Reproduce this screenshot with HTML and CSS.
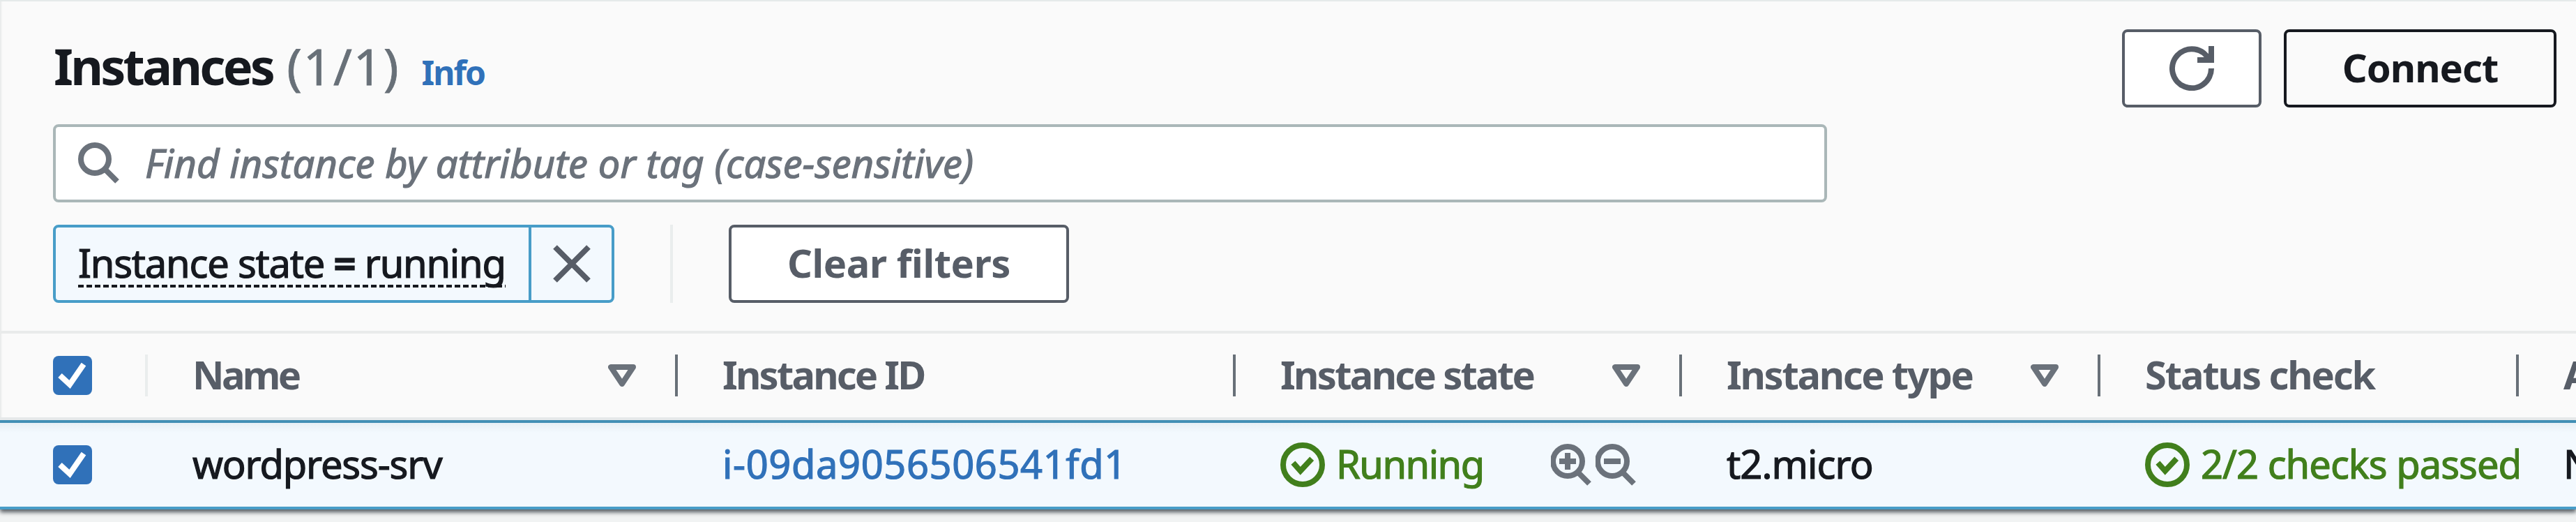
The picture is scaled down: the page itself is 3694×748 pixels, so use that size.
FILE: index.html
```html
<!DOCTYPE html>
<html lang="en">
<head>
<meta charset="utf-8">
<title>Instances</title>
<link rel="stylesheet" href="styles.css">
</head>
<body>
<svg width="0" height="0" class="defs">
  <symbol id="check-circle" viewBox="0 0 16 16"><circle cx="8" cy="8" r="7"/><path d="M4.6 7.3l2.6 2.9 4.1-4.4"/></symbol>
  <symbol id="sort" viewBox="0 0 40 32"><path d="M4 4h32L20 28z"/></symbol>
  <symbol id="tick" viewBox="0 0 56 56"><path d="M10 28l14 13L44 12"/></symbol>
</svg>
<main class="panel">
  <header class="toolbar">
    <div class="title-row">
      <h1 class="title">Instances</h1>
      <span class="count">(1/1)</span>
      <a class="info">Info</a>
      <div class="actions">
        <button class="btn refresh" aria-label="Refresh">
          <svg viewBox="0 0 16 16"><path d="M15 8A7 7 0 1 1 14.3 5" /><path d="M15 0v5h-5"/></svg>
        </button>
        <button class="btn connect"><span class="txt connect-text">Connect</span></button>
      </div>
    </div>
    <div class="search">
      <svg class="search-icon" viewBox="0 0 60 60"><circle cx="24" cy="24" r="20"/><path d="M38 38l18 18"/></svg>
      <span class="txt placeholder">Find instance by attribute or tag (case-sensitive)</span>
    </div>
    <div class="filters">
      <div class="token">
        <span class="token-body"><span class="token-text"><span class="txt token-label">Instance state <b>=</b> running</span></span></span>
        <span class="token-close"><svg viewBox="0 0 54 54"><path d="M3 3l48 48M51 3L3 51"/></svg></span>
      </div>
      <i class="filter-sep"></i>
      <button class="btn clear"><span class="txt clear-text">Clear filters</span></button>
    </div>
  </header>
  <section class="row head">
    <div class="cell select"><span class="box"><svg><use href="#tick"/></svg></span><i class="bar light"></i></div>
    <div class="cell"><span class="txt h-name">Name</span><svg class="sort"><use href="#sort"/></svg><i class="bar"></i></div>
    <div class="cell"><span class="txt h-id">Instance ID</span><i class="bar"></i></div>
    <div class="cell"><span class="txt h-state">Instance state</span><svg class="sort"><use href="#sort"/></svg><i class="bar"></i></div>
    <div class="cell"><span class="txt h-type">Instance type</span><svg class="sort"><use href="#sort"/></svg><i class="bar"></i></div>
    <div class="cell"><span class="txt h-status">Status check</span><i class="bar"></i></div>
    <div class="cell"><span class="txt">A</span></div>
  </section>
  <section class="row data">
    <div class="cell select"><span class="box"><svg><use href="#tick"/></svg></span></div>
    <div class="cell"><span class="txt d-name">wordpress-srv</span></div>
    <div class="cell"><a class="txt d-id">i-09da9056506541fd1</a></div>
    <div class="cell"><svg class="ok"><use href="#check-circle"/></svg><span class="txt green d-state">Running</span>
      <span class="zooms">
        <svg viewBox="0 0 60 60"><circle cx="24" cy="25" r="21"/><path d="M38 40l17 17M12 25h24M24 13v24"/></svg>
        <svg viewBox="0 0 60 60"><circle cx="24" cy="25" r="21"/><path d="M38 40l17 17M12 25h24"/></svg>
      </span></div>
    <div class="cell"><span class="txt d-type">t2.micro</span></div>
    <div class="cell"><svg class="ok"><use href="#check-circle"/></svg><span class="txt green d-status">2/2 checks passed</span></div>
    <div class="cell"><span class="txt d-last">N</span></div>
  </section>
</main>
</body>
</html>
```
FILE: styles.css
```css
* { box-sizing: border-box; }
body {
  margin: 0;
  width: 3694px;
  height: 748px;
  overflow: hidden;
  background: #f1f3f3;
  color: #16191f;
  font: 56px/80px "Noto Sans", "Open Sans", sans-serif;
}
svg { display: block; fill: none; flex: none; }
.defs { position: absolute; }
.panel {
  height: 730px;
  background: #fafafa;
  border-top: 2px solid #e5eaea;
  box-shadow: inset 3px 0 2px -1px #e8eaea, 0 4px 6px 0 rgba(0, 10, 20, .65);
}
.txt { display: block; margin-top: -4px; white-space: nowrap; }
.toolbar { height: 472px; padding: 40px 28px 0 76px; }
.title-row { display: flex; align-items: center; height: 112px; }
.title { margin: -8px 0 0 1px; font-size: 72px; line-height: 100px; font-weight: 700; letter-spacing: -3.8px; }
.count { margin: -8px 0 0 20px; font-size: 72px; line-height: 100px; color: #687078; letter-spacing: 2px; -webkit-text-stroke: .8px; }
.info { margin: 11px 0 0 31px; font-size: 48px; line-height: 70px; font-weight: 700; color: #3071b9; letter-spacing: -2px; }
.actions { display: flex; gap: 32px; margin-left: auto; }
.btn {
  display: flex;
  align-items: center;
  justify-content: center;
  height: 112px;
  padding: 0;
  border: 4px solid #575d67;
  border-radius: 8px;
  background: #fff;
  color: #575d67;
  font: inherit;
  font-weight: 700;
}
.refresh { width: 200px; }
.refresh svg { width: 64px; height: 64px; stroke: #575d67; stroke-width: 2; }
.connect { width: 391px; background: #fafafa; border-color: #16191f; color: #16191f; }
.connect-text { letter-spacing: -1px; }
.search {
  display: flex;
  align-items: center;
  width: 2544px;
  height: 112px;
  margin-top: 24px;
  padding-left: 32px;
  border: 4px solid #aab7b8;
  border-radius: 8px;
  background: #fff;
}
.search-icon { width: 60px; height: 60px; stroke: #6b727b; stroke-width: 8; }
.placeholder { margin-left: 36px; margin-top: -3px; font-style: italic; color: #6b727b; letter-spacing: .14px; }
.placeholder, .token-label, .data .txt { -webkit-text-stroke: 1.2px; }
.filters { display: flex; margin-top: 32px; height: 112px; }
.token {
  display: flex;
  width: 805px;
  border: 4px solid #489dc8;
  border-radius: 8px;
  background: #f3f9fe;
}
.token-body { width: 682px; padding: 12px 0 0 32px; border-right: 4px solid #489dc8; }
.token-text {
  display: block;
  width: 613px;
  height: 76px;
  background: repeating-linear-gradient(90deg, #16191f 0 8px, transparent 8px 12px) left bottom / 100% 4px no-repeat;
}
.token-label { margin-top: -2px; letter-spacing: -1.2px; }
.token-close { flex: 1; display: flex; align-items: center; justify-content: center; }
.token-close svg { width: 54px; height: 54px; stroke: #575d67; stroke-width: 8; }
.filter-sep { width: 4px; margin: 0 80px; background: #eaeded; }
.clear { width: 488px; }
.clear-text { letter-spacing: -.4px; }
.row { display: grid; grid-template-columns: 212px 760px 800px 640px 600px 600px 82px; }
.head { height: 128px; border-top: 4px solid #e9ebeb; border-bottom: 4px solid #e6e9ea; color: #575d67; font-weight: 700; }
.data {
  height: 128px;
  border-top: 4px solid #428fb5;
  border-bottom: 4px solid #489dc8;
  background: linear-gradient(#e6eff5 0, #f3f9fe 14px);
}
.cell { display: flex; align-items: center; height: 120px; padding-left: 64px; overflow: hidden; }
.select { padding-left: 76px; }
.box { width: 56px; height: 56px; border-radius: 8px; background: #3071b9; }
.box svg { width: 56px; height: 56px; stroke: #fff; stroke-width: 8; }
.bar { width: 4px; height: 60px; margin-left: auto; background: #687078; }
.light { background: #eaeded; }
.sort { width: 40px; height: 32px; margin-left: auto; stroke: #6b727b; stroke-width: 8; stroke-linejoin: round; }
.sort + .bar { margin-left: 56px; }
.h-name { letter-spacing: -3.6px; }
.h-id { letter-spacing: -2.8px; }
.h-state { letter-spacing: -2.7px; }
.h-type { letter-spacing: -2.3px; }
.h-status { letter-spacing: -2.1px; }
.ok { width: 64px; height: 64px; stroke: #417f1c; stroke-width: 2; }
.green { margin-left: 16px; color: #417f1c; }
.d-name { letter-spacing: -1.15px; }
.d-id { color: #3071b9; letter-spacing: .6px; }
.d-state { letter-spacing: -1.5px; }
.d-type { letter-spacing: -.9px; }
.d-status { letter-spacing: -.95px; }
.zooms { display: flex; gap: 4px; margin-left: auto; margin-right: 64px; }
.zooms svg { width: 60px; height: 60px; stroke: #6b727b; stroke-width: 8; }
```
